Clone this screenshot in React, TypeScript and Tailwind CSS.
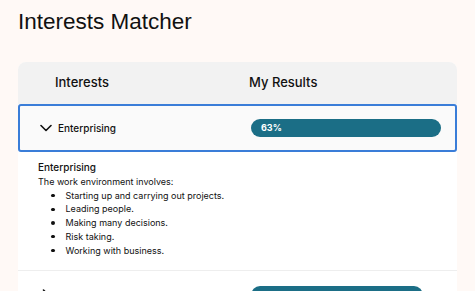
import React from "react";

type Interest = {
  name: string;
  score: number;
  open?: boolean;
  points?: string[];
};

const interests: Interest[] = [
  {
    name: "Enterprising",
    score: 63,
    open: true,
    points: [
      "Starting up and carrying out projects.",
      "Leading people.",
      "Making many decisions.",
      "Risk taking.",
      "Working with business.",
    ],
  },
  { name: "Investigative", score: 57 },
];

function Chevron({ open }: { open?: boolean }) {
  return (
    <svg
      width="12"
      height="12"
      viewBox="0 0 12 12"
      fill="none"
      stroke="#111"
      strokeWidth="1.6"
      strokeLinecap="round"
      strokeLinejoin="round"
      className="shrink-0"
    >
      {open ? <polyline points="1,3.5 6,8.5 11,3.5" /> : <polyline points="3.5,1 8.5,6 3.5,11" />}
    </svg>
  );
}

function Row({ item }: { item: Interest }) {
  return (
    <div className="border-b border-[#eeeeee]">
      <div
        className={
          item.open
            ? "flex h-[48px] items-center rounded-[3px] border-2 border-[#3a7dd8] bg-[#fafafa]"
            : "flex h-[48px] items-center border-2 border-transparent bg-white"
        }
      >
        <div className="flex w-[231px] items-center gap-[6px] pl-[20px]">
          <Chevron open={item.open} />
          <span className="text-[10px] font-medium text-[#111]">{item.name}</span>
        </div>
        <div className="flex-1">
          <div
            className="flex h-[18px] items-center rounded-full bg-[#1b6e86] pl-[10px] text-[9px] font-bold text-white"
            style={{ width: `${item.score * 3.02}px` }}
          >
            {item.score}%
          </div>
        </div>
      </div>
      {item.open && (
        <div className="bg-white px-[20px] pb-[13px] pt-[8px] text-[#111]">
          <div className="text-[10px] font-medium leading-[15px]">{item.name}</div>
          <div className="text-[9px] leading-[13.7px]">The work environment involves:</div>
          <ul className="text-[9px] leading-[13.7px]">
            {item.points?.map((p) => (
              <li key={p} className="flex items-center">
                <span className="ml-[13px] mr-[11px] h-[3.5px] w-[3.5px] shrink-0 rounded-full bg-[#111]" />
                {p}
              </li>
            ))}
          </ul>
        </div>
      )}
    </div>
  );
}

export default function App() {
  return (
    <div className="min-h-screen bg-[#fff9f6] px-[18px] pt-[9px] font-['Inter',sans-serif] text-[#111]">
      <h1 className="font-['Liberation_Sans',Arial,sans-serif] text-[22.5px] font-normal leading-[26px]">
        Interests Matcher
      </h1>
      <div className="mt-[27px] overflow-hidden rounded-t-lg bg-white">
        <div className="flex h-[42px] items-center bg-[#f2f2f2] text-[13px] font-medium">
          <div className="w-[231px] pl-[37px]">Interests</div>
          <div>My Results</div>
        </div>
        {interests.map((item) => (
          <Row key={item.name} item={item} />
        ))}
      </div>
    </div>
  );
}
